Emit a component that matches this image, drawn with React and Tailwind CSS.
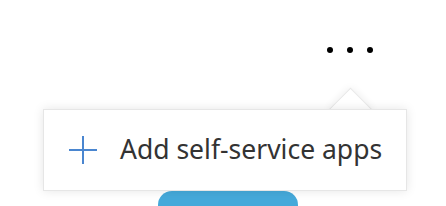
export default function App() {
  return (
    <div className="relative w-[446px] h-[206px] bg-white overflow-hidden flex flex-col" style={{ fontFamily: '"Noto Sans", "Open Sans", sans-serif' }}>
      <div className="flex justify-end pt-[47px] pr-[73px] gap-[14px]">
        <span className="w-[6px] h-[6px] rounded-full bg-black" />
        <span className="w-[6px] h-[6px] rounded-full bg-black" />
        <span className="w-[6px] h-[6px] rounded-full bg-black" />
      </div>
      <div className="mt-auto pl-[158px]">
        <div className="w-[140px] h-[15px] rounded-t-[14px] bg-[#45a9da]" />
      </div>
      <div className="absolute left-[43px] top-[109px] w-[364px] h-[82px]">
        <div className="absolute left-[292px] top-[-15px] w-[31px] h-[31px] rotate-45 bg-white border border-[#e8e8e8] shadow-[0_0_8px_rgba(0,0,0,0.08)]" />
        <div className="relative w-full h-full bg-white border border-[#e6e6e6] shadow-[0_0_10px_rgba(0,0,0,0.1)] flex items-center pl-[25px]">
          <svg width="28" height="28" viewBox="0 0 28 28" className="shrink-0">
            <path d="M14 0V28M0 14H28" stroke="#4a86d0" strokeWidth="2" />
          </svg>
          <span className="ml-[23px] text-[26.5px] leading-none text-[#333333] pb-[2px]">Add self-service apps</span>
        </div>
        <div className="absolute left-[293px] top-[1px] w-[44px] h-[16px] bg-white" />
      </div>
    </div>
  );
}
